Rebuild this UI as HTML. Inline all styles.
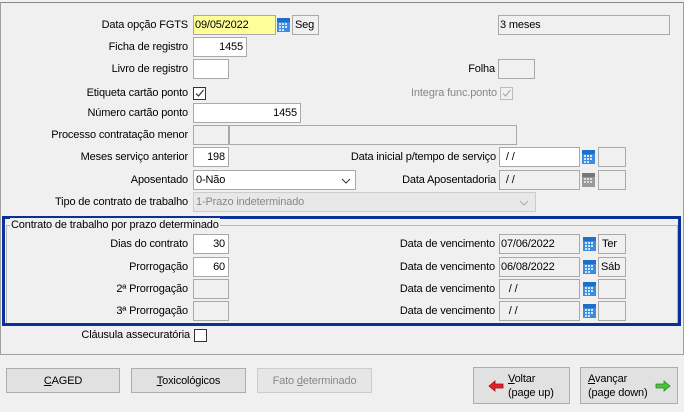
<!DOCTYPE html>
<html><head><meta charset="utf-8"><style>
*{box-sizing:border-box;margin:0;padding:0}
body{width:684px;height:412px;background:#f0f0f0;font-family:"Liberation Sans",sans-serif;font-size:11px;letter-spacing:-0.15px;color:#000;position:relative;overflow:hidden}
.a{position:absolute}
.l{position:absolute;text-align:right;white-space:nowrap;line-height:20px}
.i{position:absolute;height:20px;border:1px solid #a9a9a9;background:#fff;line-height:18px;padding:0 3px;white-space:nowrap}
.g{background:#f0f0f0}
.y{background:#ffff99}
.r{text-align:right}
.cb{position:absolute;width:13px;height:13px;border:1px solid #333;background:#fff}
.cal{position:absolute;width:13px;height:14px}
.btn{position:absolute;border:1px solid #adadad;background:#e1e1e1;text-align:center;line-height:24px}
.dis{color:#888}
</style></head><body>
<div class="a" style="left:0;top:2px;width:684px;height:353px;border:1px solid #a0a0a0;border-top-color:#888"></div>

<svg width="0" height="0" style="position:absolute"><defs>
<g id="calb"><rect x="0" y="2" width="13" height="12" fill="#3b8de0"/><rect x="0" y="0" width="13" height="4" fill="#1f6fc8"/><g fill="#cfe6ff"><rect x="2" y="5" width="2" height="2"/><rect x="5" y="5" width="2" height="2"/><rect x="8" y="5" width="2" height="2"/><rect x="2" y="8" width="2" height="2"/><rect x="5" y="8" width="2" height="2"/><rect x="8" y="8" width="2" height="2"/><rect x="2" y="11" width="2" height="2"/><rect x="5" y="11" width="2" height="2"/></g></g>
<g id="calg"><rect x="0" y="2" width="13" height="12" fill="#9a9a9a"/><rect x="0" y="0" width="13" height="4" fill="#777"/><g fill="#ddd"><rect x="2" y="5" width="2" height="2"/><rect x="5" y="5" width="2" height="2"/><rect x="8" y="5" width="2" height="2"/><rect x="2" y="8" width="2" height="2"/><rect x="5" y="8" width="2" height="2"/><rect x="8" y="8" width="2" height="2"/></g></g>
</defs></svg>

<div class="l" style="right:496px;top:15px">Data opção FGTS</div>
<div class="i y" style="left:193px;top:15px;width:83px;padding-left:1px">09/05/2022</div>
<svg class="cal" style="left:277px;top:18px"><use href="#calb"/></svg>
<div class="i g" style="left:292px;top:15px;width:27px;padding-left:2px">Seg</div>
<div class="i g" style="left:498px;top:15px;width:172px;padding-left:1px">3 meses</div>

<div class="l" style="right:496px;top:37px">Ficha de registro</div>
<div class="i r" style="left:193px;top:37px;width:54px">1455</div>

<div class="l" style="right:496px;top:59px">Livro de registro</div>
<div class="i" style="left:193px;top:59px;width:36px"></div>
<div class="l" style="right:189px;top:59px">Folha</div>
<div class="i g" style="left:498px;top:59px;width:37px"></div>

<div class="l" style="right:496px;top:83px">Etiqueta cartão ponto</div>
<div class="cb" style="left:193px;top:87px"><svg width="11" height="11" style="position:absolute;left:0;top:0"><path d="M2 5.5L4.5 8L9.5 2" stroke="#333" fill="none" stroke-width="1.2"/></svg></div>
<div class="l dis" style="right:187px;top:83px">Integra func.ponto</div>
<div class="cb" style="left:500px;top:87px;border-color:#bbb;background:#f0f0f0"><svg width="11" height="11" style="position:absolute;left:0;top:0"><path d="M2 5.5L4.5 8L9.5 2" stroke="#aaa" fill="none" stroke-width="1.2"/></svg></div>

<div class="l" style="right:496px;top:103px">Número cartão ponto</div>
<div class="i r" style="left:193px;top:103px;width:108px">1455</div>

<div class="l" style="right:496px;top:125px">Processo contratação menor</div>
<div class="i g" style="left:193px;top:125px;width:36px"></div>
<div class="i g" style="left:229px;top:125px;width:288px"></div>

<div class="l" style="right:496px;top:147px">Meses serviço anterior</div>
<div class="i r" style="left:193px;top:147px;width:36px">198</div>
<div class="l" style="right:188px;top:147px">Data inicial p/tempo de serviço</div>
<div class="i" style="left:499px;top:147px;width:81px">&nbsp;/ /</div>
<svg class="cal" style="left:582px;top:150px"><use href="#calb"/></svg>
<div class="i g" style="left:598px;top:147px;width:28px"></div>

<div class="l" style="right:496px;top:170px">Aposentado</div>
<div class="i" style="left:193px;top:170px;width:163px;padding-left:2px">0-Não<svg width="10" height="6" style="position:absolute;right:4px;top:7px"><path d="M1 1L5 5L9 1" stroke="#333" fill="none"/></svg></div>
<div class="l" style="right:188px;top:170px">Data Aposentadoria</div>
<div class="i g" style="left:499px;top:170px;width:81px">&nbsp;/ /</div>
<svg class="cal" style="left:582px;top:173px"><use href="#calg"/></svg>
<div class="i g" style="left:598px;top:170px;width:28px"></div>

<div class="l" style="right:496px;top:192px">Tipo de contrato de trabalho</div>
<div class="i dis" style="left:193px;top:192px;width:343px;background:#e8e8e8;border-color:#ccc;padding-left:2px">1-Prazo indeterminado<svg width="10" height="6" style="position:absolute;right:6px;top:7px"><path d="M1 1L5 5L9 1" stroke="#aaa" fill="none"/></svg></div>

<div class="a" style="left:2px;top:216px;width:679px;height:110px;border:3px solid #0a3296"></div>
<div class="a" style="left:6px;top:225px;width:672px;height:98px;border:1px solid #b8b8b8;border-bottom:none"></div>
<div class="a" style="left:10px;top:218px;background:#f0f0f0;padding:0 1px;line-height:14px">Contrato de trabalho por prazo determinado</div>

<div class="l" style="right:496px;top:234px">Dias do contrato</div>
<div class="i r" style="left:193px;top:234px;width:36px">30</div>
<div class="l" style="right:189px;top:234px">Data de vencimento</div>
<div class="i g" style="left:499px;top:234px;width:81px;padding-left:1px">07/06/2022</div>
<svg class="cal" style="left:583px;top:237px"><use href="#calb"/></svg>
<div class="i g" style="left:598px;top:234px;width:28px">Ter</div>

<div class="l" style="right:496px;top:257px">Prorrogação</div>
<div class="i r" style="left:193px;top:257px;width:36px">60</div>
<div class="l" style="right:189px;top:257px">Data de vencimento</div>
<div class="i g" style="left:499px;top:257px;width:81px;padding-left:1px">06/08/2022</div>
<svg class="cal" style="left:583px;top:260px"><use href="#calb"/></svg>
<div class="i g" style="left:598px;top:257px;width:28px;padding-left:2px">Sáb</div>

<div class="l" style="right:496px;top:279px">2ª Prorrogação</div>
<div class="i g" style="left:193px;top:279px;width:36px"></div>
<div class="l" style="right:189px;top:279px">Data de vencimento</div>
<div class="i g" style="left:499px;top:279px;width:81px">&nbsp;&nbsp;/ /</div>
<svg class="cal" style="left:583px;top:282px"><use href="#calb"/></svg>
<div class="i g" style="left:598px;top:279px;width:28px"></div>

<div class="l" style="right:496px;top:301px">3ª Prorrogação</div>
<div class="i g" style="left:193px;top:301px;width:36px"></div>
<div class="l" style="right:189px;top:301px">Data de vencimento</div>
<div class="i g" style="left:499px;top:301px;width:81px">&nbsp;&nbsp;/ /</div>
<svg class="cal" style="left:583px;top:304px"><use href="#calb"/></svg>
<div class="i g" style="left:598px;top:301px;width:28px"></div>

<div class="l" style="right:494px;top:325px">Cláusula assecuratória</div>
<div class="cb" style="left:194px;top:329px"></div>

<div class="btn" style="left:6px;top:368px;width:114px;height:25px"><u>C</u>AGED</div>
<div class="btn" style="left:131px;top:368px;width:115px;height:25px"><u>T</u>oxicológicos</div>
<div class="btn dis" style="left:257px;top:368px;width:115px;height:25px;background:#e6e6e6;border-color:#ccc">Fato <u>d</u>eterminado</div>

<div class="btn" style="left:473px;top:367px;width:97px;height:37px;line-height:14px;text-align:left">
<svg width="16" height="12" style="position:absolute;left:14px;top:12px"><path d="M1 6L7 1V4H15V8H7V11Z" fill="#e8202a" stroke="#a01010" stroke-width=".8"/></svg>
<div class="a" style="left:34px;top:4px"><u>V</u>oltar<br>(page up)</div></div>
<div class="btn" style="left:580px;top:367px;width:98px;height:37px;line-height:14px;text-align:left">
<div class="a" style="left:7px;top:4px"><u>A</u>vançar<br>(page down)</div>
<svg width="16" height="12" style="position:absolute;left:74px;top:12px"><path d="M15 6L9 1V4H1V8H9V11Z" fill="#4cc23a" stroke="#2a8a1e" stroke-width=".8"/></svg></div>
</body></html>
